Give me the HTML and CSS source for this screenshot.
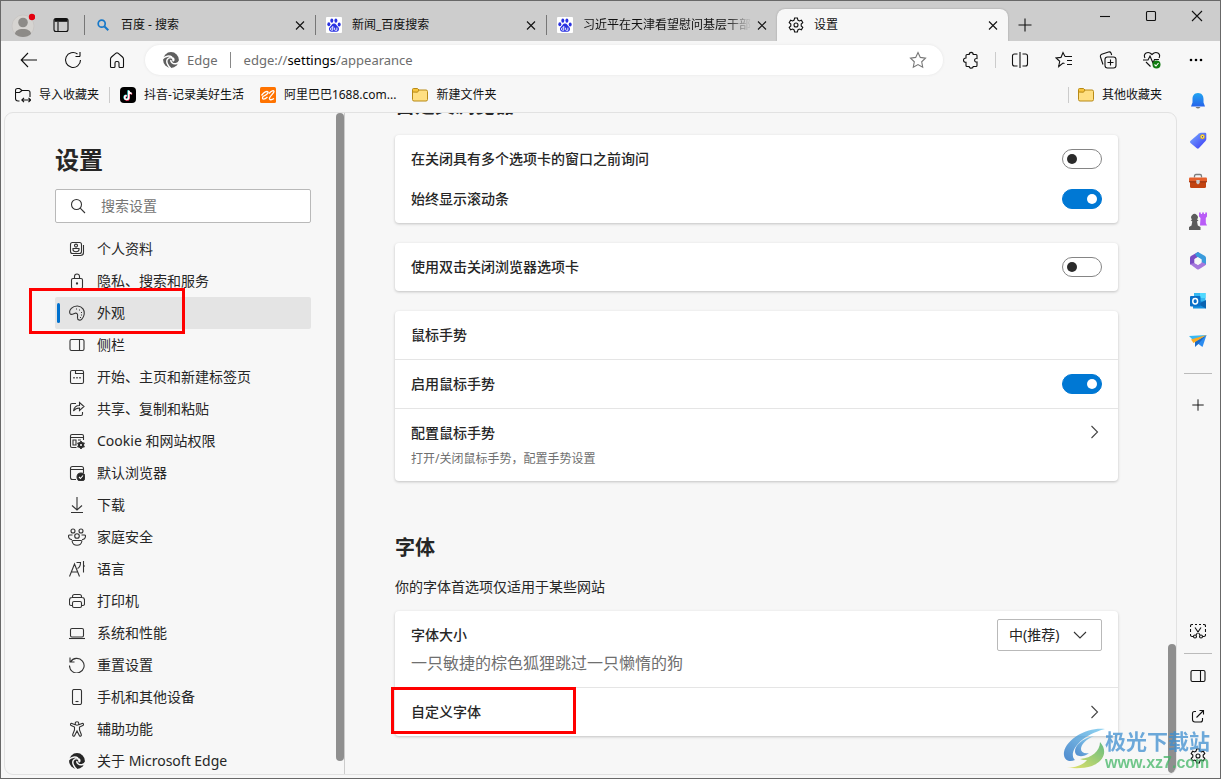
FILE: index.html
```html
<!DOCTYPE html>
<html lang="zh-CN">
<head>
<meta charset="utf-8">
<title>设置</title>
<link rel="stylesheet" href="styles.css">
</head>
<body>
<svg class="defs" aria-hidden="true">
  <defs>
    <symbol id="close" viewBox="0 0 16 16"><path d="M4 4.500l8 8M12 4.500l-8 8"/></symbol>
    <symbol id="plus" viewBox="0 0 16 16"><path d="M8 1.500v13M1.500 8h13"/></symbol>
    <symbol id="chevron" viewBox="0 0 16 16"><path d="M5.500 2l6 6-6 6"/></symbol>
    <symbol id="gear" viewBox="0 0 16 16"><path d="M6.600 1h2.800l.5 2.100 1.400.8 2.100-.7 1.400 2.400-1.600 1.500v1.800l1.600 1.500-1.400 2.400-2.100-.7-1.400.8-.5 2.100H6.600l-.5-2.100-1.400-.8-2.100.7-1.400-2.400 1.600-1.500V7.100L1.200 5.600l1.400-2.400 2.100.7 1.400-.8z"/><circle cx="8" cy="8" r="2"/></symbol>
    <symbol id="panel" viewBox="0 0 16 16"><rect x="1" y="2.500" width="14" height="11" rx="1.500"/><path d="M10.500 2.500v11"/></symbol>
    <symbol id="paw" viewBox="0 0 16 16"><rect width="16" height="16" rx="1" fill="#fff"/><g fill="#2a32e1"><ellipse cx="2.800" cy="7.200" rx="1.500" ry="2"/><ellipse cx="5.800" cy="3.600" rx="1.500" ry="2.200"/><ellipse cx="9.900" cy="3.600" rx="1.500" ry="2.200"/><ellipse cx="13.200" cy="7.400" rx="1.500" ry="2"/><path d="M8 6.500c-2 0-2.300 1.800-3.700 3-1.600 1.300-1.600 2.600-.9 4 .8 1.600 2.700 1.300 4.600 1.300s3.800.3 4.600-1.300c.7-1.400.6-2.700-.9-4C10.300 8.300 10 6.500 8 6.500z"/></g><path d="M6.800 9v4.200H5.400c-1.400 0-1.400-2.300 0-2.300h1.400M8.600 10.700v2c0 .5.400.6.800.6h1.500v-2.700" fill="none" stroke="#fff" stroke-width=".9"/></symbol>
    <symbol id="folder" viewBox="0 0 16 16"><rect x=".5" y="3" width="15" height="11" rx="1.500" fill="#ffdf82" stroke="#b88a17"/><path d="M.5 5V2.500Q.5 1.500 1.500 1.500h4l1.500 1.500-1.500 2.200z" fill="#f7c43d" stroke="#b88a17"/></symbol>
    <symbol id="edge" viewBox="0 0 16 16"><circle cx="8" cy="8" r="7.900" fill="currentColor"/><path d="M-.5 6.800C2.500 3.800 6.500 3.300 9 5.200M7.500 5.500C4 6 3 9 4.500 12c.7 1.600 1.800 3 3.200 4.300M16.500 9.200c-1.700 2.900-5.500 3.400-7.500 1.600-.9-.8-1.400-1.700-1-2.800" fill="none" stroke="var(--cut)" stroke-width="1.500"/><path d="M7.500 5.200c3-.6 4.600 1.200 4 3.300-.3.900-1.200 1.300-1.800.9-.6-.5-.3-1-.4-1.700-.2-1-1-1.300-1.800-1z" fill="var(--cut)"/></symbol>
  </defs>
</svg>

<div class="window">
  <header class="tabbar">
    <div class="tabbar-lead">
      <button class="profile" aria-label="个人资料"><svg viewBox="0 0 24 24" width="24" height="24"><circle cx="12" cy="13" r="11" fill="#d6d4d1" stroke="#c2c0bd" stroke-width=".6"/><circle cx="12" cy="9.500" r="4.800" fill="#8d8b88"/><path d="M4 21c0-3 3-5 8-5s8 2 8 5c-2 2-5 3-8 3s-6-1-8-3z" fill="#8d8b88"/><circle cx="21" cy="4" r="3.200" fill="#e3000f"/></svg></button>
      <button aria-label="标签页操作菜单"><svg class="line dark" viewBox="0 0 16 16" width="16" height="16"><rect x="1" y="1.500" width="14" height="13" rx="2"/><path d="M5 5v9.500"/><path d="M1.500 3.300h13" stroke-width="3"/></svg></button>
    </div>
    <div class="tabs" role="tablist">
      <div class="tab" role="tab"><svg class="fav" viewBox="0 0 16 16"><g fill="none" stroke="#1778c9"><circle cx="6.700" cy="6.700" r="3.500" stroke-width="1.700"/><path d="M9.500 9.500l3.800 3.800" stroke-width="2"/></g></svg><span>百度 - 搜索</span><button aria-label="关闭"><svg class="line dark"><use href="#close"/></svg></button></div>
      <div class="tab" role="tab"><svg class="fav"><use href="#paw"/></svg><span>新闻_百度搜索</span><button aria-label="关闭"><svg class="line dark"><use href="#close"/></svg></button></div>
      <div class="tab" role="tab"><svg class="fav"><use href="#paw"/></svg><span class="fade">习近平在天津看望慰问基层干部</span><button aria-label="关闭"><svg class="line dark"><use href="#close"/></svg></button></div>
      <div class="tab active" role="tab" aria-selected="true"><svg class="fav line dark"><use href="#gear"/></svg><span>设置</span><button aria-label="关闭"><svg class="line dark"><use href="#close"/></svg></button></div>
    </div>
    <button class="newtab" aria-label="新建标签页"><svg class="line dark"><use href="#plus"/></svg></button>
    <div class="winctl">
      <button aria-label="最小化"><svg class="line dark" viewBox="0 0 16 16"><path d="M3 8.500h10"/></svg></button>
      <button aria-label="最大化"><svg class="line dark" viewBox="0 0 16 16"><rect x="3.500" y="3.500" width="9" height="9" rx="1"/></svg></button>
      <button aria-label="关闭窗口"><svg class="line dark" viewBox="0 0 16 16"><path d="M3 3l10 10M13 3L3 13"/></svg></button>
    </div>
  </header>

  <div class="toolbar">
    <button aria-label="返回"><svg class="line dark" viewBox="0 0 18 18"><path d="M17 9H1.500M8 2L1.200 9 8 16"/></svg></button>
    <button aria-label="刷新"><svg class="line dark" viewBox="0 0 18 18"><path d="M16.500 9A7.500 7.500 0 1 1 13.500 3M16 5.500h-4.500M16 5.500V1"/></svg></button>
    <button aria-label="主页"><svg class="line dark" viewBox="0 0 18 18"><path d="M2.500 8Q2.500 7 3.500 6L8 2.200q1-.8 2 0L14.500 6q1 1 1 2v7.500q0 1-1 1h-2.500q-1 0-1-1V12q0-1.500-1.500-1.500h-1Q7 10.500 7 12v3.500q0 1-1 1H3.500q-1 0-1-1z"/></svg></button>
    <div class="address">
      <svg class="edge"><use href="#edge"/></svg>
      <span class="site">Edge</span>
      <span class="url" role="textbox" aria-label="地址" contenteditable="true">edge://<b>settings</b>/appearance</span>
      <button aria-label="收藏此页"><svg class="line" viewBox="0 0 18 18"><path d="M9 1.500l2.300 4.900 5.200.7-3.800 3.700 1 5.400L9 13.600l-4.700 2.600 1-5.400L1.500 7.100l5.200-.7z"/></svg></button>
    </div>
    <button aria-label="扩展"><svg class="line dark" viewBox="0 0 18 18"><path d="M5 3.500h2.200c0-2.800 4-2.800 4 0H14q1 0 1 1V7.500c-3.200-.5-3.200 4 0 3.500v3.500q0 1-1 1h-2.800c0 2.200-4 2.200-4 0H5q-1 0-1-1v-3.200c-3.300 0-3.300-4.300 0-4.300V4.500q0-1 1-1z"/></svg></button>
    <i class="sep"></i>
    <button aria-label="拆分屏幕"><svg class="line dark" viewBox="0 0 18 18"><path d="M9 1v16M6.500 3h-3Q1.500 3 1.500 5v8q0 2 2 2h3M11.500 3h3q2 0 2 2v8q0 2-2 2h-3"/></svg></button>
    <button aria-label="收藏夹"><svg class="line dark" viewBox="0 0 18 18"><path d="M10 5.500h7M12 9.500h5M12 13.500h5M9.500 12.500L8 12l-4.300 3.500 1-5.200L1 7l5-.6 2-4.900 2 4"/></svg></button>
    <button aria-label="集锦"><svg class="line dark" viewBox="0 0 18 18"><rect x="6" y="6" width="11" height="11" rx="2.500"/><path d="M11.500 8.500v6M8.500 11.500h6M4 13.500L1.500 6q-.5-2 1.200-2.700L9.500 1q1.800-.5 2.500 1l.7 2"/></svg></button>
    <button aria-label="浏览器概要"><svg class="line dark" viewBox="0 0 18 18"><path d="M2 7C-.5 2.500 5-.5 9 3.500c4-4 9.500-1 7 3.500M3 11l4.500 4.500M0 9h5l2-4 3 7 1.500-3.500H16"/><circle cx="13.500" cy="13.500" r="4" fill="#107c10" stroke="none"/><path d="M11.500 13.500l1.500 1.500 2.500-3" stroke="#fff"/></svg></button>
    <button aria-label="设置及其他"><svg viewBox="0 0 18 18"><circle cx="4" cy="9" r="1.300"/><circle cx="9" cy="9" r="1.300"/><circle cx="14" cy="9" r="1.300"/></svg></button>
  </div>

  <div class="body">
    <div class="page">
      <nav class="bookmarks" aria-label="收藏夹栏">
        <a href="#"><svg class="line dark" viewBox="0 0 16 16"><path d="M4.500 14H3q-2.500 0-2.500-2.500V3.500Q.5 1.500 2.500 1.500h2L7 3.500h6q2 0 2 2V10M.5 5.500H4.500L7 3.500M7 13h8.500M9 10.800L6.800 13 9 15.200M13.500 10.800l2.200 2.200-2.200 2.200"/></svg>导入收藏夹</a>
        <i class="sep"></i>
        <a href="#"><svg viewBox="0 0 16 16"><rect width="16" height="16" rx="4"/><g fill="none" stroke-width="1.600"><path d="M8.200 3.300v6.900a2 2 0 1 1-2-2M8.200 3.500c.2 1.600 1.300 2.600 3 2.800" stroke="#25f4ee"/><path d="M9.200 4v6.900a2 2 0 1 1-2-2M9.200 4c.2 1.600 1.300 2.800 3 3" stroke="#fe2c55"/><path d="M8.700 3.600v6.900a2 2 0 1 1-2-2M8.700 3.600c.2 1.600 1.300 2.800 3 3" stroke="#fff"/></g></svg>抖音-记录美好生活</a>
        <a href="#"><svg viewBox="0 0 16 16"><rect width="16" height="16" rx="1.500" fill="#ff7300"/><path d="M1.500 8.500C4 5 7 3.700 8 5c.7 1-1.500 2.800-5 4.500-1.500 2.500.5 4 4.500.5M9 6.500c2.500-3 5-3.500 5-2 0 1.800-3.500 4-4.500 6.500-.5 2.500 2.500 2 4.500.5" fill="none" stroke="#fff" stroke-width="1.300"/></svg>阿里巴巴1688.com...</a>
        <a href="#"><svg><use href="#folder"/></svg>新建文件夹</a>
        <span class="other"><i class="sep"></i><a href="#"><svg><use href="#folder"/></svg>其他收藏夹</a></span>
      </nav>

      <div class="frame">
        <aside class="side">
          <h1>设置</h1>
          <label class="search"><svg class="line" viewBox="0 0 16 16"><circle cx="6.500" cy="6.500" r="5"/><path d="M10.200 10.200L15 15"/></svg><input type="search" placeholder="搜索设置" aria-label="搜索设置"></label>
          <ul>
            <li><a href="#"><svg class="line" viewBox="0 0 16 16"><rect x="1.500" y="1.500" width="11" height="11" rx="2"/><circle cx="7" cy="4.600" r="1.500"/><path d="M4 7.500h6v1c0 3-6 3-6 0zM14.500 4v7.500q0 3-3 3H4"/></svg>个人资料</a></li>
            <li><a href="#"><svg class="line" viewBox="0 0 16 16"><rect x="2.500" y="5.500" width="11" height="10" rx="1.500"/><path d="M5.500 5.500V3.500a2.500 2.500 0 0 1 5 0v2"/><circle cx="8" cy="10.500" r=".6"/></svg>隐私、搜索和服务</a></li>
            <li class="current"><a href="#" aria-current="page"><svg class="line" viewBox="0 0 16 16"><path d="M1 8.500C-.5 5 3.500.8 8.500 1c5 .3 7.500 4.500 6.500 9-.8 3.600-3.200 5.500-5 5-2-.5-1.600-2.500-1.400-4 .3-2-1-3.200-2.600-2.700C4 9 2 10.500 1 8.500z"/><path d="M7 4h1M10 5h1M12 7.500h1M12 10h1M11 12.500h1"/></svg>外观</a><span class="mark" aria-hidden="true"></span></li>
            <li><a href="#"><svg class="line"><use href="#panel"/></svg>侧栏</a></li>
            <li><a href="#"><svg class="line" viewBox="0 0 16 16"><rect x="1.500" y="1.500" width="13" height="13" rx="1.500"/><path d="M6.500 1.500v3h8"/><path d="M4.300 8.700h1.400M7.300 8.700h1.400M10.300 8.700h1.400" stroke-width="1.500"/></svg>开始、主页和新建标签页</a></li>
            <li><a href="#"><svg class="line" viewBox="0 0 16 16"><path d="M7 2.500H3q-1.500 0-1.500 1.500v9Q1.500 14.500 3 14.500h9q1.500 0 1.500-1.500v-2M4.500 10C5 6.500 7 4.500 10.500 4.500V1.500l4.500 4-4.500 4v-2.500C8 7 6 7.800 4.500 10z"/></svg>共享、复制和粘贴</a></li>
            <li><a href="#"><svg class="line" viewBox="0 0 16 16"><path d="M7.500 14.500H3q-1.500 0-1.500-1.500V3Q1.500 1.500 3 1.500h10q1.500 0 1.500 1.500v4M1.500 4.500h13M4 7h3v5H4zM9 7h3"/><path d="M12 8v8M8.500 10l7 4M15.500 10l-7 4" stroke-width="1.800"/><circle class="fill" cx="12" cy="12" r="2.600"/><circle cx="12" cy="12" r="1" fill="#fff" stroke="none"/></svg>Cookie 和网站权限</a></li>
            <li><a href="#"><svg class="line" viewBox="0 0 16 16"><path d="M7 14.500H3.500q-2 0-2-2v-9q0-2 2-2h9q2 0 2 2V8M1.500 4.500h13"/><circle class="fill" cx="12" cy="12" r="4"/><path d="M10 12l1.500 1.500 2.500-3" stroke="#fff"/></svg>默认浏览器</a></li>
            <li><a href="#"><svg class="line" viewBox="0 0 16 16"><path d="M8 0v13M3 8.500L8 13l5-4.500M2 15.500h12"/></svg>下载</a></li>
            <li><a href="#"><svg class="line wide" viewBox="0 0 18 18"><circle cx="5" cy="3" r="2"/><circle cx="13" cy="3" r="2"/><circle cx="9" cy="8" r="2.300"/><path d="M4.500 7H1.500Q.5 7 .5 8c0 2 1.500 3.500 3.500 3.700M13.500 7h3q1 0 1 1c0 2-1.500 3.500-3.500 3.700M5 12.500h8q1 0 .8 1c-1 5-8.600 5-9.600 0q-.2-1 .8-1z"/></svg>家庭安全</a></li>
            <li><a href="#"><svg class="line" viewBox="0 0 16 16"><path d="M.5 15.500L5.500 3l5 12.500M2.300 11h6.400M7.500 1.500h4c0 3-1 5-3 6M14.500 0v11.500M14.500 5H16"/></svg>语言</a></li>
            <li><a href="#"><svg class="line" viewBox="0 0 16 16"><path d="M3.500 4.500v-1q0-2 2-2h5q2 0 2 2v1M3.500 12.500H2q-1.500 0-1.500-1.500V7Q.5 4.500 3 4.500h10q2.500 0 2.500 2.500v4q0 1.500-1.500 1.500h-1.500"/><rect x="3.500" y="8.500" width="9" height="6" rx="1.500"/></svg>打印机</a></li>
            <li><a href="#"><svg class="line" viewBox="0 0 16 16"><rect x="1.500" y="3.500" width="13" height="8.500" rx="1.500"/><path d="M0 13.500h16"/></svg>系统和性能</a></li>
            <li><a href="#"><svg class="line" viewBox="0 0 16 16"><path d="M1.500 5a7.300 7.300 0 1 1-1 3.500M1 .5V5h4.500"/></svg>重置设置</a></li>
            <li><a href="#"><svg class="line" viewBox="0 0 16 16"><rect x="3.500" y=".5" width="9" height="15" rx="1.500"/><path d="M6.500 12.500h3"/></svg>手机和其他设备</a></li>
            <li><a href="#"><svg class="line" viewBox="0 0 16 16"><circle cx="8" cy="2.500" r="1.800"/><path d="M6.200 3.800L3 2.500C1.500 2 .8 4 2.200 4.600L5.500 6v3L3.700 13.500c-.5 1.700 1.500 2.300 2 1L8 10l2.300 4.500c.5 1.300 2.500.7 2-1L10.500 9V6l3.300-1.400C15.200 4 14.500 2 13 2.500L9.800 3.800"/></svg>辅助功能</a></li>
            <li><a href="#"><svg class="edge"><use href="#edge"/></svg>关于 Microsoft Edge</a></li>
          </ul>
          <span class="thumb" aria-hidden="true"></span>
        </aside>

        <main class="content">
          <div class="scrolled">
            <h2 class="first">自定义浏览器</h2>
            <section class="card pair">
              <label class="row">在关闭具有多个选项卡的窗口之前询问<input class="toggle" type="checkbox" role="switch"></label>
              <label class="row">始终显示滚动条<input class="toggle" type="checkbox" role="switch" checked></label>
            </section>
            <section class="card">
              <label class="row">使用双击关闭浏览器选项卡<input class="toggle" type="checkbox" role="switch"></label>
            </section>
            <section class="card">
              <h3 class="row">鼠标手势</h3>
              <label class="row">启用鼠标手势<input class="toggle" type="checkbox" role="switch" checked></label>
              <button class="row tall"><span class="stack"><span>配置鼠标手势</span><small>打开/关闭鼠标手势，配置手势设置</small></span><svg class="line"><use href="#chevron"/></svg></button>
            </section>
            <h2>字体</h2>
            <p>你的字体首选项仅适用于某些网站</p>
            <section class="card">
              <div class="row font">
                <span class="stack"><label for="size">字体大小</label><span class="sample">一只敏捷的棕色狐狸跳过一只懒惰的狗</span></span>
                <span class="select"><select id="size"><option>中(推荐)</option><option>小</option><option>大</option></select><svg class="line" viewBox="0 0 16 16"><path d="M2 5l6 6 6-6"/></svg></span>
              </div>
              <button class="row custom"><span>自定义字体</span><svg class="line"><use href="#chevron"/></svg><span class="mark" aria-hidden="true"></span></button>
            </section>
          </div>
          <span class="thumb" aria-hidden="true"></span>
        </main>
      </div>
    </div>

    <aside class="rail">
      <button aria-label="通知"><svg viewBox="0 0 18 18"><linearGradient id="g1" x2="0" y2="1"><stop stop-color="#22a5f1"/><stop offset="1" stop-color="#2563eb"/></linearGradient><path d="M9 1C5 1 3.500 4 3.500 7v3.500L2 14.500h14l-1.500-4V7c0-3-1.500-6-5.500-6z" fill="url(#g1)"/><path d="M6.500 15h5q-2.500 3-5 0z" fill="#777"/></svg></button>
      <button aria-label="购物"><svg viewBox="0 0 18 18"><linearGradient id="g2" x2="1" y2="1"><stop stop-color="#7ab0ff"/><stop offset="1" stop-color="#3936f5"/></linearGradient><path d="M10 1.500q1-.8 2-.8h4q1.300 0 1.300 1.300v5q0 1-.8 2L9.800 16.300q-1 .8-2 0L1.500 11q-1-1-.2-2z" fill="url(#g2)"/><circle cx="13.500" cy="4.700" r="2.200" fill="#ffe25a" stroke="#d49a00" stroke-width=".6"/><circle cx="13.500" cy="4.700" r=".7" fill="#2b3bc0"/></svg></button>
      <button aria-label="工具"><svg viewBox="0 0 18 18"><path d="M5.500 5.500V4q0-1.500 1.500-1.500h4q1.500 0 1.500 1.500v1.500" fill="none" stroke="#7d7d7d" stroke-width="1.300"/><path d="M1 5.500h16q1 0 1 1V10H0V6.500q0-1 1-1z" fill="#e5602c"/><path d="M1 10h16v4.500q0 1.500-1.500 1.500h-13Q1 16 1 14.500z" fill="#c24412"/><path d="M0 9.300h18v1H0z" fill="#8e2f10"/><path d="M7.300 8h3.400v3L9 12.500 7.300 11z" fill="#c9cdd0"/></svg></button>
      <button aria-label="游戏"><svg viewBox="0 0 18 18"><path d="M10 .5h1.800V2h1.300V.5h1.800V2h1.300V.5H18V4.500L16.800 6v5l1.200 2.500h-7L11.500 6 10 4.500z" fill="#b95cf7"/><path d="M3 7.500a3.300 3.300 0 1 1 5 0l1.500.8-1.500 1.200.8 4 2.700 1.500v3H0v-3l2.500-1.500.8-4L1.700 8.300z" fill="#5c5c5c"/></svg></button>
      <button aria-label="Microsoft 365"><svg viewBox="0 0 18 18"><path d="M9 0L2 4Q1 4.700 1 6v6.500L5.500 12V7l6.500-4z" fill="#7a4cc4"/><path d="M9 0l7 4q1 .8 1 2v7l-4.500-2.500V7.500L7.500 4.500 6 2z" fill="#3a9bdc"/><path d="M1 12l7 5.300q1 .6 2 0l6-3.800q1-.8 1-1.500l-4.500-2L9 12.800 5.500 11z" fill="#a678dd"/><path d="M9 5.300l3.400 1.900v3.800L9 12.900l-3.400-1.900V7.200z" fill="#f7f7f7"/></svg></button>
      <button aria-label="Outlook"><svg viewBox="0 0 18 18"><path d="M5 1h11.500v9H5z" fill="#35b8f1"/><path d="M11 1h5.500v5H11z" fill="#50d9ff"/><path d="M4 8l13 2v6.500H4z" fill="#1490df"/><path d="M9 12l8-4v8.500z" fill="#0a63b0"/><rect x="1" y="4" width="10.500" height="10.500" rx="1" fill="#0a6fc8"/><ellipse cx="6.200" cy="9.200" rx="2.400" ry="2.700" fill="none" stroke="#fff" stroke-width="1.500"/></svg></button>
      <button aria-label="拖放"><svg viewBox="0 0 18 18"><path d="M0 4l17.500-1L6 10z" fill="#39b7f2"/><path d="M17.500 3L13.500 15 8 11z" fill="#2c8cf0"/><path d="M17.500 3L6 9.500V15l3-2.800z" fill="#1a6ac8"/><path d="M2 7.500L17.500 3 4.500 11z" fill="#ffab1f"/></svg></button>
      <i></i>
      <button class="add" aria-label="自定义"><svg class="line dark"><use href="#plus"/></svg></button>
      <span class="grow"></span>
      <button aria-label="屏幕截图"><svg class="line dark" viewBox="0 0 16 16"><path d="M.5 4V3Q.5 1.500 2 1.500h1M5 1.500h2M9 1.500h2M13 1.500h1q1.500 0 1.500 1.500v1M.5 6v3M15.500 6v3M.5 11v1q0 1.500 1.500 1.500h1M15.500 11v1q0 1.500-1.500 1.500h-1M5 4.500l5 7.500M11 4.500L6 12"/><circle cx="5" cy="13.500" r="1.500"/><circle cx="11" cy="13.500" r="1.500"/></svg></button>
      <i class="tight"></i>
      <button aria-label="隐藏边栏"><svg class="line dark"><use href="#panel"/></svg></button>
      <button aria-label="在新窗口打开"><svg class="line dark" viewBox="0 0 16 16"><path d="M6 3.500H4.500Q2.500 3.500 2.500 5.500v6q0 2.500 2.500 2.500h5.500q2 0 2-2v-2M6.500 9.500l7-7M9.500 2.500h4v4"/></svg></button>
      <button aria-label="设置"><svg class="line dark"><use href="#gear"/></svg></button>
    </aside>
  </div>
  <div class="stamp" aria-hidden="true">
    <svg viewBox="0 0 42 42"><linearGradient id="w1" x1="0" y1="1" x2="1" y2="0"><stop stop-color="#1867c0"/><stop offset="1" stop-color="#6cc7ee"/></linearGradient><linearGradient id="w2" x1="0" y1="1" x2="1" y2="0"><stop stop-color="#e0db38"/><stop offset="1" stop-color="#35a95a"/></linearGradient><path d="M42 1C25-1 4 10 1 24c-1 7 4 11 11 8C5 26 15 8 42 1z" fill="url(#w1)"/><path d="M31 8C19 10 12 18 12 23c0 6 8 7 14 2-5 1-8-1-8-4 0-5 6-10 13-13z" fill="url(#w1)"/><path d="M37 14c8 9 4 19-8 24-8 3-18 2-25 2 10-1 16-3 20-8-3 0-5 0-7-1 12-1 20-8 20-17z" fill="url(#w2)"/></svg>
    <span><b>极光下载站</b><em>www.xz7.com</em></span>
  </div>
</div>
</body>
</html>
```
FILE: styles.css
```css
* { box-sizing: border-box; }

body {
  margin: 0;
  color: #262626;
  font: 14px/20px "Noto Sans", "Noto Sans CJK SC", sans-serif;
}

button {
  display: flex;
  align-items: center;
  justify-content: center;
  padding: 0;
  border: 0;
  background: none;
  color: inherit;
  font: inherit;
}

a { color: inherit; text-decoration: none; }
h1, h2, h3, p, ul { margin: 0; padding: 0; }
svg { flex: none; width: 16px; height: 16px; }

.defs { position: absolute; width: 0; height: 0; }
.line { fill: none; stroke: #333; stroke-width: 1.1; }
.line.dark { stroke: #111; }
.line .fill { fill: #262626; }
.line.wide { width: 18px; height: 18px; }
.sep { width: 1px; height: 16px; background: #ccc; }
.edge { --cut: #f7f7f7; color: #262626; }

.window {
  position: relative;
  display: flex;
  flex-direction: column;
  height: 100vh;
  overflow: hidden;
  border: 1px solid #686868;
  background: #f7f7f7;
}

/* Tab strip */
.tabbar {
  display: flex;
  align-items: flex-end;
  height: 40px;
  background: #cdcdcd;
  font-size: 12px;
}
.tabbar-lead {
  display: flex;
  align-items: center;
  gap: 18px;
  width: 83px;
  height: 32px;
  padding-left: 10px;
}
.profile svg { width: 24px; height: 24px; }
.tabs { display: flex; flex: 0 1 924px; }
.tab {
  position: relative;
  display: flex;
  flex: 1 1 0;
  align-items: center;
  gap: 10px;
  min-width: 0;
  height: 32px;
  padding: 0 7px 0 11px;
  color: #111;
}
.tab:not(.active)::before {
  content: "";
  position: absolute;
  left: 0;
  top: 6px;
  width: 1px;
  height: 20px;
  background: #777;
}
.tab span {
  flex: 1;
  overflow: hidden;
  white-space: nowrap;
}
.tab .fade {
  margin-right: -8px;
  -webkit-mask: linear-gradient(to right, #000 84%, transparent);
  mask: linear-gradient(to right, #000 84%, transparent);
}
.tab.active {
  border-radius: 8px 8px 0 0;
  background: #f7f7f7;
  box-shadow: 0 0 2px #999;
  clip-path: inset(-2px -2px 0 -2px);
}
.newtab { width: 34px; height: 32px; }
.winctl { display: flex; align-self: flex-start; margin-left: auto; }
.winctl button { width: 46px; height: 30px; }

/* Navigation toolbar */
.toolbar {
  display: flex;
  align-items: center;
  gap: 4px;
  height: 38px;
  padding: 0 4px 0 8px;
}
.toolbar button { flex: none; width: 40px; height: 30px; }
.toolbar button svg { width: 18px; height: 18px; }
.address {
  display: flex;
  flex: 1;
  align-items: center;
  height: 30px;
  margin: 0 4px;
  padding: 0 5px 0 18px;
  border-radius: 15px;
  background: #fff;
  box-shadow: 0 0 3px #e4e4e4;
  color: #6d6d6d;
  font-size: 13px;
}
.address .edge { --cut: #fff; color: #5f5f5f; }
.address .line { stroke: #777; }
.site { margin: 0 12px 0 8px; }
.url {
  flex: 1;
  padding-left: 13px;
  border-left: 1px solid #888;
  line-height: 16px;
}
.url b { color: #000; font-weight: 400; }

.body { display: flex; flex: 1; min-height: 0; }
.page { display: flex; flex: 1; flex-direction: column; min-width: 0; }

/* Favourites bar */
.bookmarks {
  display: flex;
  align-items: center;
  gap: 16px;
  height: 33px;
  padding: 0 15px 1px 14px;
  color: #111;
  font-size: 12px;
}
.bookmarks a { display: flex; align-items: center; gap: 8px; white-space: nowrap; }
.bookmarks > .sep { margin: 0 -6px; }
.other { display: flex; align-items: center; gap: 9px; margin-left: auto; }

/* Settings page */
.frame {
  display: flex;
  flex: 1;
  min-height: 0;
  margin: 0 0 3px 3px;
  overflow: hidden;
  border: 1px solid #e2e2e2;
  border-radius: 9px;
}
.side {
  position: relative;
  flex: none;
  width: 340px;
  padding: 31px 33px 0 50px;
  border-right: 1px solid #ccc;
}
h1 { font-size: 24px; line-height: 32px; }
.search {
  display: flex;
  align-items: center;
  gap: 15px;
  height: 34px;
  margin: 13px 0 10px;
  padding: 0 14px 1px;
  border: 1px solid #b9b9b9;
  border-radius: 2px;
  background: #fff;
}
.search input {
  flex: 1;
  min-width: 0;
  padding: 0;
  border: 0;
  outline: 0;
  font: inherit;
}
.search input::placeholder { color: #757575; }
.side ul { list-style: none; }
.side li { position: relative; height: 32px; border-radius: 2px; }
.side a {
  display: flex;
  align-items: center;
  height: 32px;
  padding-left: 14px;
}
.side a svg { margin-right: 12px; }
.side a .wide { margin: 0 11px 0 -1px; }
.side .current { background: #e4e4e4; }
.current::before {
  content: "";
  position: absolute;
  left: 2px;
  top: 6px;
  width: 3px;
  height: 20px;
  border-radius: 2px;
  background: #0071ce;
}
.mark { position: absolute; border: 3px solid #f00; }
.current .mark { left: -26px; top: -9px; width: 156px; height: 46px; }
.thumb {
  position: absolute;
  right: 0;
  width: 8px;
  border-radius: 4px;
  background: #8f8f8f;
}
.side .thumb { top: 0; bottom: 13px; }
.content > .thumb { bottom: 1px; height: 129px; }

.content {
  position: relative;
  display: flex;
  flex: 1;
  flex-direction: column;
  justify-content: flex-end;
  min-width: 0;
  padding: 0 58px 38px 50px;
  overflow: hidden;
}
.scrolled { display: flex; flex-direction: column; flex: none; }
h2 { font-size: 20px; line-height: 28px; margin: 33px 0 15px; }
.first { margin: 0 0 15px; }
p { margin-bottom: 14px; }
.card {
  margin-bottom: 20px;
  border-radius: 4px;
  background: #fff;
  box-shadow: 0 1px 3px rgba(0, 0, 0, .22);
}
.card:last-child { margin-bottom: 0; }
.row {
  display: flex;
  align-items: center;
  justify-content: space-between;
  width: 100%;
  min-height: 48px;
  padding: 0 16px;
  font-size: 14px;
  font-weight: 500;
  text-align: left;
}
.row + .row { min-height: 49px; border-top: 1px solid #e5e5e5; }
.pair { padding: 4px 0; }
.pair .row, .pair .row + .row { min-height: 40px; border: 0; }
.row.tall { align-items: flex-start; padding: 14px 16px 12px; }
.row > svg { stroke: #444; }
.tall > svg { margin-top: 1px; }
.stack { display: flex; flex-direction: column; gap: 6px; }
small { color: #6f6f6f; font-size: 12px; font-weight: 400; }
.font { min-height: 76px; align-items: flex-start; padding-top: 8px; }
.font .stack { padding-top: 6px; }
.sample { color: #6f6f6f; font-size: 16px; font-weight: 400; line-height: 24px; }
.custom { position: relative; }
.custom .mark { left: -4px; top: -1px; width: 185px; height: 47px; }

.toggle {
  position: relative;
  width: 40px;
  height: 20px;
  margin: 0;
  appearance: none;
  border: 1px solid #858585;
  border-radius: 10px;
  background: #fff;
}
.toggle::before {
  content: "";
  position: absolute;
  left: 4px;
  top: 4px;
  width: 10px;
  height: 10px;
  border-radius: 50%;
  background: #2b2b2b;
}
.toggle:checked { border-color: #0078d4; background: #0078d4; }
.toggle:checked::before { left: 24px; background: #fff; }

.select { position: relative; display: flex; align-items: center; }
.select select {
  width: 105px;
  height: 32px;
  padding: 0 11px 2px;
  appearance: none;
  border: 1px solid #b9b9b9;
  border-radius: 2px;
  background: #fff;
  color: inherit;
  font: 400 14px "Noto Sans", "Noto Sans CJK SC", sans-serif;
}
.select svg { position: absolute; right: 14px; pointer-events: none; }

/* Side rail */
.rail {
  display: flex;
  flex-direction: column;
  align-items: center;
  width: 43px;
  padding: 2px 2px 2px 0;
}
.rail button { width: 40px; height: 40px; }
.rail button svg { width: 18px; height: 18px; }
.rail button svg.line { width: 16px; height: 16px; }
.rail .add svg.line { width: 14px; height: 14px; }
.rail i { width: 28px; height: 1px; margin: 12px 0 11px; background: #bbb; }
.rail .tight { margin: 2px 0; }
.grow { flex: 1; }

.stamp {
  position: absolute;
  right: 10px;
  bottom: 6px;
  display: flex;
  opacity: .75;
  pointer-events: none;
}
.stamp svg { width: 42px; height: 42px; }
.stamp span { display: flex; flex-direction: column; }
.stamp b { color: #3e8ed0; font-size: 21px; line-height: 26px; }
.stamp em { color: #43b666; font: bold 16px/18px "Liberation Sans", sans-serif; }
```
